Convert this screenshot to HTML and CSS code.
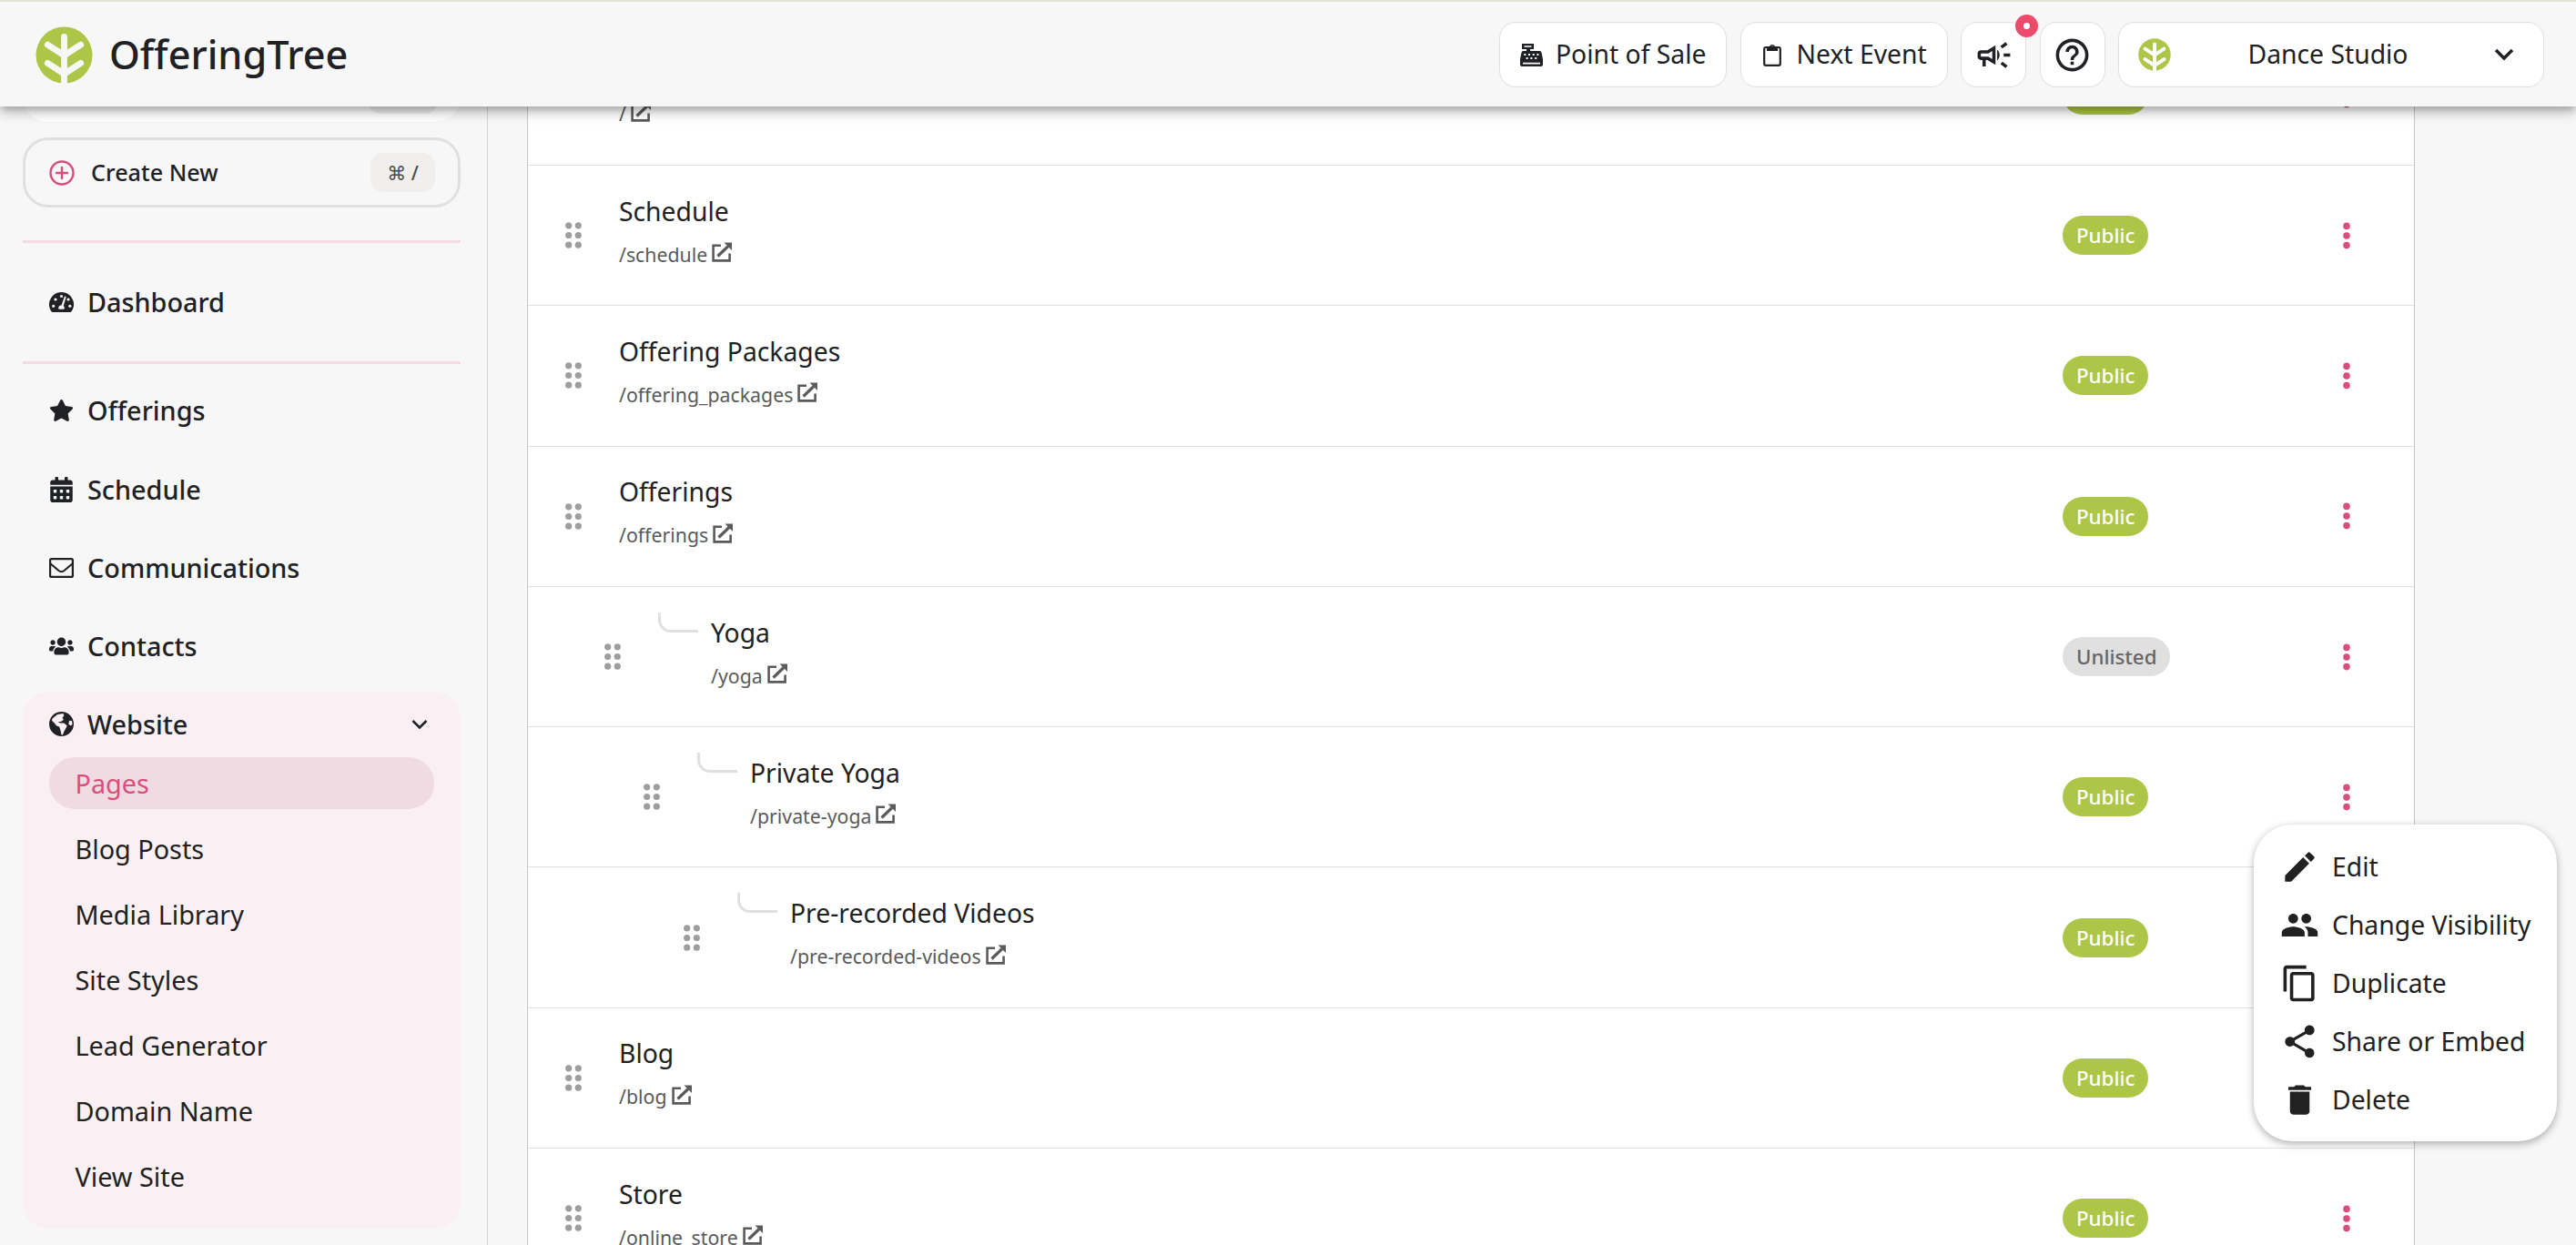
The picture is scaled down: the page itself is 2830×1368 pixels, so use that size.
FILE: index.html
```
<!DOCTYPE html>
<html lang="en">
	<head>
		<meta charset="utf-8">
		<title>OfferingTree - Pages</title>
		<link rel="stylesheet" href="styles.css">
	</head>
	<body>
		<!-- shared icons -->
		<svg class="sprite">
			<symbol id="launch" viewBox="0 0 22 22">
				<path d="M10 3.800H1.600V20.400h18V12.500" fill="none" stroke="currentColor" stroke-width="2.600"/>
				<path d="M6.500 15.500L18 4.500" stroke="currentColor" stroke-width="3.200"/>
				<path d="M13.500 0.500H22V9z" fill="currentColor"/>
			</symbol>
			<symbol id="drag" viewBox="0 0 18 29">
				<g fill="currentColor"><circle cx="3.700" cy="3.800" r="3.600"/><circle cx="14.300" cy="3.800" r="3.600"/><circle cx="3.700" cy="14.500" r="3.600"/><circle cx="14.300" cy="14.500" r="3.600"/><circle cx="3.700" cy="25.200" r="3.600"/><circle cx="14.300" cy="25.200" r="3.600"/></g>
			</symbol>
			<symbol id="dots" viewBox="0 0 8 30">
				<g fill="currentColor"><circle cx="4" cy="4.400" r="3.800"/><circle cx="4" cy="15" r="3.800"/><circle cx="4" cy="25.600" r="3.800"/></g>
			</symbol>
		</svg>

		<header class="topbar">
			<svg class="logo" viewBox="0 0 64 64"><circle cx="32" cy="32" r="31.500" fill="#adc648"/><path d="M32 11.500V64" stroke="#f7f7f7" stroke-width="7" stroke-linecap="round"/><path d="M13.500 20.500L32 32.500l18.500-12M13.500 41L32 53l18.500-12" fill="none" stroke="#f7f7f7" stroke-width="7" stroke-linecap="round"/></svg>
			<span class="brand">OfferingTree</span>
			<nav class="actions">
				<a class="btn pos">
					<svg width="25" height="25" viewBox="0 0 25 25"><path fill="#202124" fill-rule="evenodd" d="M2 0h13v6h-4v2H21.500a2 2 0 0 1 2 1.700L25 17v6a2 2 0 0 1-2 2H2a2 2 0 0 1-2-2v-6L1.500 9.700A2 2 0 0 1 3.500 8H7V6H2zM4.500 2.200v1.600h8V2.200zM3 20.800v1.600h19v-1.600zM4.300 11v2h2V11zM9 11v2h2V11zM13.700 11v2h2V11zM18.400 11v2h2V11zM6.600 15v2h2V15zM11.400 15v2h2V15zM16.200 15v2h2V15z"/></svg>
					<span>Point of Sale</span>
				</a>
				<a class="btn next">
					<svg width="20" height="25" viewBox="0 0 20 25"><rect x="1.200" y="4" width="17.600" height="19.800" rx="1.800" fill="none" stroke="#202124" stroke-width="2.200"/><path fill="#202124" fill-rule="evenodd" d="M4 3h3a3.200 3.200 0 0 1 6 0h3v5H4zM10 2.600a1.200 1.200 0 1 0 0 2.400 1.200 1.200 0 0 0 0-2.400z"/></svg>
					<span>Next Event</span>
				</a>
				<a class="btn square">
					<svg width="43" height="43" viewBox="0 0 24 24"><path fill="#202124" d="M18 11v2h4v-2h-4zm-2 6.610c.96.710 2.210 1.650 3.200 2.390.4-.53.8-1.070 1.200-1.600-.99-.74-2.240-1.680-3.200-2.400-.4.540-.8 1.080-1.200 1.610zM20.400 5.600c-.4-.53-.8-1.070-1.200-1.600-.99.740-2.240 1.680-3.200 2.400.4.530.8 1.070 1.200 1.600.96-.72 2.210-1.650 3.200-2.400zM4 9c-1.100 0-2 .9-2 2v2c0 1.100.9 2 2 2h1v4h2v-4h1l5 3V6L8 9H4zm5.030 1.710L11 9.530v4.940l-1.970-1.180-.48-.29H4v-2h4.550l.48-.29zM15.500 12c0-1.330-.58-2.530-1.500-3.350v6.690c.92-.81 1.500-2.010 1.500-3.340z"/></svg>
					<i class="notice"></i>
				</a>
				<a class="btn square">
					<svg width="43" height="43" viewBox="0 0 24 24"><path fill="#202124" d="M11 18h2v-2h-2v2zm1-16C6.480 2 2 6.480 2 12s4.480 10 10 10 10-4.480 10-10S17.520 2 12 2zm0 18c-4.410 0-8-3.590-8-8s3.590-8 8-8 8 3.590 8 8-3.590 8-8 8zm0-14c-2.210 0-4 1.790-4 4h2c0-1.100.9-2 2-2s2 .9 2 2c0 2-3 1.750-3 5h2c0-2.250 3-2.500 3-5 0-2.210-1.790-4-4-4z"/></svg>
				</a>
				<a class="btn studio">
					<svg width="36" height="36" viewBox="0 0 64 64"><circle cx="32" cy="32" r="31.500" fill="#adc648"/><path d="M32 11.500V64M13.500 20.500L32 32.500l18.500-12M13.500 41L32 53l18.500-12" fill="none" stroke="#fff" stroke-width="7" stroke-linecap="round"/></svg>
					<span>Dance Studio</span>
					<svg width="22" height="14" viewBox="0 0 22 14"><path d="M2 2l9 9 9-9" fill="none" stroke="#202124" stroke-width="3.400"/></svg>
				</a>
			</nav>
		</header>

		<div class="layout">
			<aside class="sidebar">
				<div class="quick search"><kbd></kbd></div>
				<div class="quick create">
					<svg width="28" height="28" viewBox="0 0 28 28"><g fill="none" stroke="#d94f7b" stroke-width="2.400"><circle cx="14" cy="14" r="12.500"/><path d="M14 8v12M8 14h12" stroke-linecap="round"/></g></svg>
					<span>Create New</span>
					<kbd>⌘ /</kbd>
				</div>
				<hr>
				<a class="nav dash">
					<svg viewBox="0 0 27 22"><path fill="#202124" d="M13.500 0A13.500 13.500 0 0 0 2 20.500Q2.800 22 4 22h19q1.200 0 2-1.500A13.500 13.500 0 0 0 13.500 0z"/><g fill="#f7f7f7"><circle cx="4.700" cy="15.300" r="1.600"/><circle cx="7" cy="8" r="1.600"/><circle cx="13.500" cy="4.500" r="1.600"/><circle cx="21" cy="8" r="1.600"/><circle cx="22.800" cy="15.300" r="1.600"/><path d="M17 4.500l1.700.5-3 10a3 3 0 0 1 .8 3.800h-6a3 3 0 0 1 3-4.300z"/></g></svg>
					<span>Dashboard</span>
				</a>
				<hr>
				<a class="nav first">
					<svg viewBox="0 0 576 512"><path fill="#202124" d="M259.300 17.800L194 150.200 47.900 171.500c-26.200 3.800-36.700 36.100-17.700 54.600l105.700 103-25 145.500c-4.500 26.300 23.200 46 46.400 33.700L288 439.600l130.700 68.700c23.200 12.200 50.900-7.400 46.400-33.700l-25-145.500 105.700-103c19-18.500 8.500-50.800-17.700-54.600L382 150.200 316.700 17.800c-11.700-23.600-45.600-23.900-57.400 0z"/></svg>
					<span>Offerings</span>
				</a>
				<a class="nav">
					<svg viewBox="0 0 448 512"><path fill="#202124" d="M0 464c0 26.500 21.500 48 48 48h352c26.500 0 48-21.500 48-48V192H0v272zm320-196c0-6.600 5.400-12 12-12h40c6.600 0 12 5.400 12 12v40c0 6.600-5.400 12-12 12h-40c-6.600 0-12-5.400-12-12v-40zm0 128c0-6.600 5.400-12 12-12h40c6.600 0 12 5.400 12 12v40c0 6.600-5.400 12-12 12h-40c-6.600 0-12-5.400-12-12v-40zM192 268c0-6.600 5.400-12 12-12h40c6.600 0 12 5.400 12 12v40c0 6.600-5.400 12-12 12h-40c-6.600 0-12-5.400-12-12v-40zm0 128c0-6.600 5.400-12 12-12h40c6.600 0 12 5.400 12 12v40c0 6.600-5.400 12-12 12h-40c-6.600 0-12-5.400-12-12v-40zM64 268c0-6.600 5.400-12 12-12h40c6.600 0 12 5.400 12 12v40c0 6.600-5.400 12-12 12H76c-6.600 0-12-5.400-12-12v-40zm0 128c0-6.600 5.400-12 12-12h40c6.600 0 12 5.400 12 12v40c0 6.600-5.400 12-12 12H76c-6.600 0-12-5.400-12-12v-40zM400 64h-48V16c0-8.800-7.200-16-16-16h-32c-8.800 0-16 7.200-16 16v48H160V16c0-8.800-7.200-16-16-16h-32c-8.800 0-16 7.200-16 16v48H48C21.500 64 0 85.500 0 112v48h448v-48c0-26.500-21.500-48-48-48z"/></svg>
					<span>Schedule</span>
				</a>
				<a class="nav">
					<svg viewBox="0 0 27 22"><rect x="1.100" y="1.100" width="24.800" height="19.800" rx="1.500" fill="none" stroke="#202124" stroke-width="2.200"/><path d="M1 6l9.500 8q3 2.400 6 0L26 6" fill="none" stroke="#202124" stroke-width="2.200"/></svg>
					<span>Communications</span>
				</a>
				<a class="nav">
					<svg viewBox="0 0 640 512"><path fill="#202124" d="M96 224c35.300 0 64-28.700 64-64s-28.700-64-64-64-64 28.700-64 64 28.700 64 64 64zm448 0c35.300 0 64-28.700 64-64s-28.700-64-64-64-64 28.700-64 64 28.700 64 64 64zm32 32h-64c-17.600 0-33.500 7.100-45.100 18.600 40.300 22.100 68.900 62 75.100 109.400h66c17.700 0 32-14.300 32-32v-32c0-35.300-28.700-64-64-64zm-256 0c61.900 0 112-50.100 112-112S381.900 32 320 32 208 82.100 208 144s50.100 112 112 112zm76.800 32h-8.300c-20.800 10-43.900 16-68.500 16s-47.600-6-68.500-16h-8.300C179.600 288 128 339.600 128 403.200V432c0 26.500 21.500 48 48 48h288c26.500 0 48-21.500 48-48v-28.800c0-63.600-51.600-115.200-115.200-115.200zm-223.700-13.400C161.500 263.100 145.600 256 128 256H64c-35.300 0-64 28.700-64 64v32c0 17.700 14.300 32 32 32h65.900c6.300-47.400 34.900-87.300 75.200-109.400z"/></svg>
					<span>Contacts</span>
				</a>
				<div class="group">
					<a class="group-head">
						<svg width="27" height="27" viewBox="0 0 28 28"><circle cx="14" cy="14" r="14" fill="#202124"/><path fill="#faf0f4" d="M4 7.500L9.500 3l6.500-1 1 2.500-2 2.500 1.500 2-3 2.500H10l2.500 1.500H17l3.500 3-1.500 3-2 3.500-1.500 4h-1.500l-1-5-1.500-4.500-3-1-2.500-3L3 10zM23 10l3 .500.500 4-2 1.500-2.500-2z"/></svg>
						<span>Website</span>
						<svg class="chev" width="18" height="12" viewBox="0 0 18 12"><path d="M1.500 2l7.500 7.500L16.500 2" fill="none" stroke="#202124" stroke-width="2.600"/></svg>
					</a>
					<a class="sub active">Pages</a>
					<a class="sub">Blog Posts</a>
					<a class="sub">Media Library</a>
					<a class="sub">Site Styles</a>
					<a class="sub">Lead Generator</a>
					<a class="sub">Domain Name</a>
					<a class="sub">View Site</a>
				</div>
			</aside>

			<main class="pages">
				<div class="row">
					<svg class="home" viewBox="0 0 26 26"><path fill="#1a237e" d="M13 0L0 13v13h11v-8h4v8h11V13z"/></svg>
					<div class="page"><b>Home</b><small>/<svg><use href="#launch"/></svg></small></div>
					<div class="status"><span class="badge">Public</span></div>
					<svg class="more"><use href="#dots"/></svg>
				</div>
				<div class="row">
					<svg class="drag"><use href="#drag"/></svg>
					<div class="page"><b>Schedule</b><small>/schedule<svg><use href="#launch"/></svg></small></div>
					<div class="status"><span class="badge">Public</span></div>
					<svg class="more"><use href="#dots"/></svg>
				</div>
				<div class="row">
					<svg class="drag"><use href="#drag"/></svg>
					<div class="page"><b>Offering Packages</b><small>/offering_packages<svg><use href="#launch"/></svg></small></div>
					<div class="status"><span class="badge">Public</span></div>
					<svg class="more"><use href="#dots"/></svg>
				</div>
				<div class="row">
					<svg class="drag"><use href="#drag"/></svg>
					<div class="page"><b>Offerings</b><small>/offerings<svg><use href="#launch"/></svg></small></div>
					<div class="status"><span class="badge">Public</span></div>
					<svg class="more"><use href="#dots"/></svg>
				</div>
				<div class="row level-1">
					<svg class="drag"><use href="#drag"/></svg>
					<i class="branch"></i>
					<div class="page"><b>Yoga</b><small>/yoga<svg><use href="#launch"/></svg></small></div>
					<div class="status"><span class="badge unlisted">Unlisted</span></div>
					<svg class="more"><use href="#dots"/></svg>
				</div>
				<div class="row level-2">
					<svg class="drag"><use href="#drag"/></svg>
					<i class="branch"></i>
					<div class="page"><b>Private Yoga</b><small>/private-yoga<svg><use href="#launch"/></svg></small></div>
					<div class="status"><span class="badge">Public</span></div>
					<svg class="more"><use href="#dots"/></svg>
				</div>
				<div class="row level-3">
					<svg class="drag"><use href="#drag"/></svg>
					<i class="branch"></i>
					<div class="page"><b>Pre-recorded Videos</b><small>/pre-recorded-videos<svg><use href="#launch"/></svg></small></div>
					<div class="status"><span class="badge">Public</span></div>
					<svg class="more"><use href="#dots"/></svg>
				</div>
				<div class="row">
					<svg class="drag"><use href="#drag"/></svg>
					<div class="page"><b>Blog</b><small>/blog<svg><use href="#launch"/></svg></small></div>
					<div class="status"><span class="badge">Public</span></div>
					<svg class="more"><use href="#dots"/></svg>
				</div>
				<div class="row">
					<svg class="drag"><use href="#drag"/></svg>
					<div class="page"><b>Store</b><small>/online_store<svg><use href="#launch"/></svg></small></div>
					<div class="status"><span class="badge">Public</span></div>
					<svg class="more"><use href="#dots"/></svg>
				</div>
			</main>
		</div>

		<div class="menu">
			<a><svg viewBox="0 0 24 24"><path d="M3 17.250V21h3.750L17.810 9.940l-3.750-3.750L3 17.250zM20.710 7.040a1 1 0 0 0 0-1.410l-2.340-2.340a1 1 0 0 0-1.410 0l-1.830 1.830 3.750 3.750 1.830-1.830z"/></svg>Edit</a>
			<a><svg viewBox="0 0 24 24"><path d="M16 11c1.660 0 2.990-1.340 2.990-3S17.660 5 16 5s-3 1.340-3 3 1.340 3 3 3zm-8 0c1.660 0 2.990-1.340 2.990-3S9.660 5 8 5 5 6.340 5 8s1.340 3 3 3zm0 2c-2.330 0-7 1.170-7 3.500V19h14v-2.500c0-2.330-4.670-3.500-7-3.500zm8 0c-.29 0-.62.020-.97.050 1.160.84 1.970 1.970 1.970 3.450V19h6v-2.500c0-2.330-4.670-3.500-7-3.500z"/></svg>Change Visibility</a>
			<a><svg viewBox="0 0 24 24"><path d="M16 1H4c-1.100 0-2 .9-2 2v14h2V3h12V1zm3 4H8c-1.100 0-2 .9-2 2v14c0 1.100.9 2 2 2h11c1.100 0 2-.9 2-2V7c0-1.100-.9-2-2-2zm0 16H8V7h11v14z"/></svg>Duplicate</a>
			<a><svg viewBox="0 0 24 24"><path d="M18 16.080c-.76 0-1.440.3-1.960.77L8.910 12.700c.05-.23.090-.46.090-.7s-.04-.47-.09-.7l7.050-4.110c.54.5 1.250.81 2.040.81 1.660 0 3-1.340 3-3s-1.340-3-3-3-3 1.340-3 3c0 .24.040.47.090.7L8.040 9.810C7.500 9.310 6.790 9 6 9c-1.660 0-3 1.340-3 3s1.340 3 3 3c.79 0 1.500-.31 2.040-.81l7.120 4.160c-.05.21-.08.43-.08.65 0 1.610 1.310 2.920 2.920 2.920s2.920-1.310 2.920-2.920-1.310-2.920-2.920-2.920z"/></svg>Share or Embed</a>
			<a><svg viewBox="0 0 24 24"><path d="M6 19c0 1.100.9 2 2 2h8c1.100 0 2-.9 2-2V7H6v12zM19 4h-3.500l-1-1h-5l-1 1H5v2h14V4z"/></svg>Delete</a>
		</div>
	</body>
</html>
```

FILE: styles.css
```
* {
	box-sizing: border-box;
}

html,body {
	margin: 0;
	padding: 0;
	height: 100%;
	overflow: hidden;
}

body {
	display: flex;
	flex-direction: column;
	background: #f7f7f7;
	color: #202124;
	font-family: "Noto Sans", sans-serif;
	font-size: 28.300px;
	line-height: 38px;
}

svg {
	flex: none;
}

.sprite {
	display: none;
}

/* Header */
.topbar {
	position: relative;
	z-index: 10;
	display: flex;
	align-items: center;
	flex: none;
	height: 117px;
	padding: 1px 35px 0 39px;
	border-top: 2px solid #e3e4d6;
	background: #f7f7f7;
	box-shadow: 0 4px 8px -2px rgba(0,0,0,0.2), 0 8px 10px rgba(0,0,0,0.14), 0 2px 20px rgba(0,0,0,0.12);
}
.logo {
	width: 63px;
	height: 63px;
}
.brand {
	margin-left: 18px;
	font-size: 43.200px;
	font-weight: 500;
	line-height: 60px;
}
.actions {
	display: flex;
	gap: 14.500px;
	margin-left: auto;
}
.btn {
	position: relative;
	display: flex;
	align-items: center;
	height: 72px;
	border: 1px solid #e0e0e0;
	border-radius: 18px;
	background: #fff;
}
.btn span {
	padding-bottom: 2px;
}
.pos {
	width: 250px;
	padding-left: 22px;
	gap: 14px;
}
.next {
	width: 228px;
	padding-left: 24px;
	gap: 17px;
}
.square {
	width: 72px;
	justify-content: center;
}
.studio {
	width: 468px;
	padding: 0 32px 0 21px;
	justify-content: space-between;
}
.studio span {
	padding-right: 10px;
}
.notice {
	position: absolute;
	top: -9px;
	right: -14px;
	width: 25px;
	height: 25px;
	border: 9px solid #ed4b6c;
	border-radius: 50%;
	background: #fff;
}

/* Sidebar */
.layout {
	display: flex;
	flex: 1;
	min-height: 0;
}
.sidebar {
	width: 536px;
	flex: none;
	padding: 0 29px 0 25px;
	border-right: 1px solid #d5d5d8;
	font-size: 28.800px;
}
.quick {
	display: flex;
	align-items: center;
	width: 481px;
	border-radius: 28px;
}
.search {
	height: 77px;
	margin-top: -59px;
	padding-right: 25px;
	background: #fff;
	border-bottom: 1px solid #faf0f4;
}
.quick kbd {
	display: flex;
	align-items: center;
	justify-content: center;
	width: 71px;
	height: 43px;
	margin-left: auto;
	border-radius: 14px;
	background: #f0efee;
	color: #4a4a4a;
	font-family: "Noto Sans", "DejaVu Sans", sans-serif;
	font-size: 21px;
}
.search kbd {
	width: 77px;
	height: 57px;
}
.create {
	height: 77px;
	margin-top: 16px;
	padding: 0 25px 0 26px;
	border: 3px solid #e0e0e0;
	font-size: 25.200px;
	font-weight: 500;
}
.create span {
	margin-left: 18px;
	padding-bottom: 1px;
}
hr {
	width: 481px;
	height: 3px;
	margin: 36px 0 0;
	border: 0;
	background: #f3dbe3;
}
.nav {
	display: flex;
	align-items: center;
	height: 86.400px;
	padding-left: 29px;
	gap: 15px;
	font-weight: 500;
}
.nav svg {
	width: 27px;
	height: 28px;
}
.dash {
	height: 130px;
}
.dash + hr {
	margin: 0;
}
.first {
	margin-top: 8px;
}
.group {
	width: 481px;
	height: 590px;
	margin-top: 6px;
	padding: 7px 29px;
	border-radius: 28px;
	background: #faf0f4;
}
.group-head {
	display: flex;
	align-items: center;
	height: 58px;
	gap: 15px;
	font-weight: 500;
}
.chev {
	margin: 0 7px 0 auto;
}
.sub {
	display: flex;
	align-items: center;
	height: 57px;
	margin: 7px 0 15px;
	padding: 2px 0 0 28.500px;
	border-radius: 28px;
	color: #212121;
}
.sub + .sub {
	margin-top: 0;
}
.active {
	background: #f1dbe2;
	color: #d94f7b;
}

/* Pages table */
.pages {
	width: 2074px;
	margin-left: 43px;
	border: solid #c6c6ce;
	border-width: 0 1px;
	background: #fff;
}
.row {
	display: flex;
	align-items: center;
	height: 154.300px;
	padding-left: 41px;
	border-bottom: 1px solid #e0e0e0;
}
.row:first-child {
	margin-top: -89.300px;
}
.drag {
	width: 18px;
	height: 29px;
	margin-right: 41px;
	color: #9e9e9e;
}
.home {
	width: 26px;
	height: 26px;
	margin: 0 37px 0 -4px;
}
.page {
	flex: 1;
	padding-bottom: 9px;
}
.page b {
	display: block;
	color: #212121;
	font-weight: 400;
	line-height: 40px;
}
.page small {
	display: flex;
	align-items: center;
	margin-top: 11px;
	color: #5a5a5a;
	font-size: 21.300px;
	line-height: 34px;
}
.page small svg {
	width: 22px;
	height: 22px;
	margin: -5px 0 0 5px;
}
.branch {
	align-self: flex-start;
	width: 44px;
	height: 22px;
	margin: 28px 14px 0 0;
	border: solid #e0e0e0;
	border-width: 0 0 3px 3px;
	border-bottom-left-radius: 14px;
}
.level-1 { padding-left: 84px; }
.level-2 { padding-left: 127px; }
.level-3 { padding-left: 171px; }
.status {
	display: flex;
	width: 308px;
}
.badge {
	height: 43px;
	padding: 0 15px;
	border-radius: 22px;
	background: #adc648;
	color: #fff;
	font-size: 22.300px;
	font-weight: 500;
	line-height: 43px;
}
.unlisted {
	background: #e0e0e0;
	color: #666;
}
.more {
	width: 8px;
	height: 30px;
	margin-right: 70px;
	color: #d94f7b;
}

/* Row menu */
.menu {
	position: absolute;
	top: 906px;
	left: 2476px;
	width: 333px;
	padding: 14px 0;
	border-radius: 42px;
	background: #fff;
	box-shadow: 0 4px 8px rgba(0,0,0,0.22), 0 0 8px rgba(0,0,0,0.1);
}
.menu a {
	display: flex;
	align-items: center;
	height: 64px;
	padding-left: 29px;
	gap: 14px;
	color: #212121;
}
.menu svg {
	width: 43px;
	height: 43px;
	fill: #212121;
}
```
